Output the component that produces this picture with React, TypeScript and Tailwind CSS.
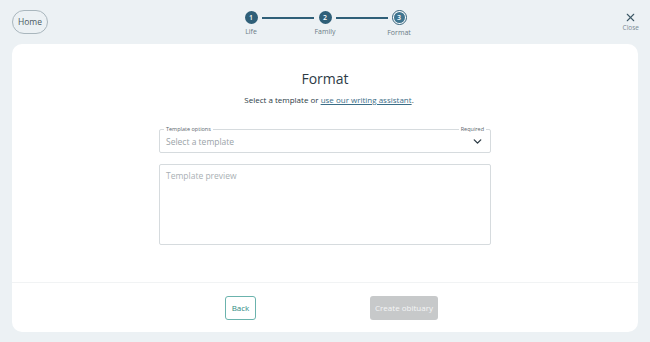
import { ChevronDown, X } from "lucide-react";

const steps = [
  { n: 1, label: "Life" },
  { n: 2, label: "Family" },
  { n: 3, label: "Format", current: true },
];

function Stepper() {
  return (
    <div className="flex items-start">
      {steps.map((s, i) => (
        <div key={s.n} className="flex items-start">
          <div className="flex w-[14px] flex-col items-center">
            {s.current ? (
              <div className="flex h-[15px] w-[15px] items-center justify-center rounded-full border-[1.5px] border-[#2f5f78] bg-white">
                <div className="flex h-[11px] w-[11px] items-center justify-center rounded-full bg-[#3f7590] text-[7px] font-semibold leading-none text-white">
                  {s.n}
                </div>
              </div>
            ) : (
              <div className="mt-[1px] flex h-[13px] w-[13px] items-center justify-center rounded-full bg-[#2f5f78] text-[7px] font-semibold leading-none text-white">
                {s.n}
              </div>
            )}
            <span className="mt-[4px] whitespace-nowrap text-[7px] leading-none text-[#6b7b85]">
              {s.label}
            </span>
          </div>
          {i < steps.length - 1 && (
            <div className="mx-[4px] mt-[7px] h-[2px] w-[52px] bg-[#2f5f78]" />
          )}
        </div>
      ))}
    </div>
  );
}

export default function App() {
  return (
    <div
      className="flex h-[342px] w-[650px] flex-col bg-[#ecf1f4] px-[12px] pb-[10px]"
      style={{ fontFamily: '"Open Sans", sans-serif' }}
    >
      {/* Header */}
      <div className="relative flex h-[44px] items-start justify-between pt-[10px]">
        <button className="flex h-[24px] w-[36px] items-center justify-center rounded-full border border-[#a9b6bd] text-[8.5px] text-[#4a5a63]">
          Home
        </button>
        <div className="absolute left-[232px] top-[10px]">
          <Stepper />
        </div>
        <div className="mr-[-1px] flex flex-col items-center pt-[1px]">
          <X className="h-[13px] w-[13px] text-[#3d5866]" strokeWidth={2} />
          <span className="mt-[1px] text-[6.5px] leading-none text-[#7b8a93]">Close</span>
        </div>
      </div>

      {/* Card */}
      <div className="flex flex-1 flex-col rounded-[10px] bg-white">
        <div className="flex flex-1 flex-col items-center pt-[26px]">
          <h1 className="text-[14px] leading-[18px] text-[#2d3b45]">Format</h1>
          <p className="mt-[6px] pl-[8px] text-[8px] font-medium leading-[12px] text-[#2d3b45]">
            Select a template or{" "}
            <span className="text-[#3b6e88] underline underline-offset-1">use our writing assistant</span>.
          </p>

          <div className="relative mt-[23px] flex h-[24px] w-[332px] items-center justify-between rounded-[2px] border border-[#d6dbde] px-[6px]">
            <span className="absolute left-[4px] top-[-5px] bg-white px-[2px] text-[5.5px] leading-[8px] text-[#5a656c]">
              Template options
            </span>
            <span className="absolute right-[4px] top-[-5px] bg-white px-[2px] text-[5.5px] leading-[8px] text-[#5a656c]">
              Required
            </span>
            <span className="mt-[2px] text-[8.5px] text-[#9aa3a8]">Select a template</span>
            <ChevronDown className="mt-[1px] h-[13px] w-[13px] text-[#2d3b45]" strokeWidth={2.5} />
          </div>

          <div className="mt-[11px] h-[81px] w-[332px] rounded-[2px] border border-[#d6dbde] px-[6px] pt-[5px] text-[8.5px] leading-[12px] text-[#a9b0b4]">
            Template preview
          </div>
        </div>

        <div className="flex h-[50px] items-start justify-center gap-[114px] border-t border-[#f1f3f4] pl-[13px] pt-[13px]">
          <button className="h-[24px] w-[31px] rounded-[3px] border border-[#6bb3ad] text-[8px] text-[#2e8a82]">
            Back
          </button>
          <button className="h-[24px] w-[68px] rounded-[3px] bg-[#c7c9ca] text-[8px] text-[#f4f5f6]">
            Create obituary
          </button>
        </div>
      </div>
    </div>
  );
}
